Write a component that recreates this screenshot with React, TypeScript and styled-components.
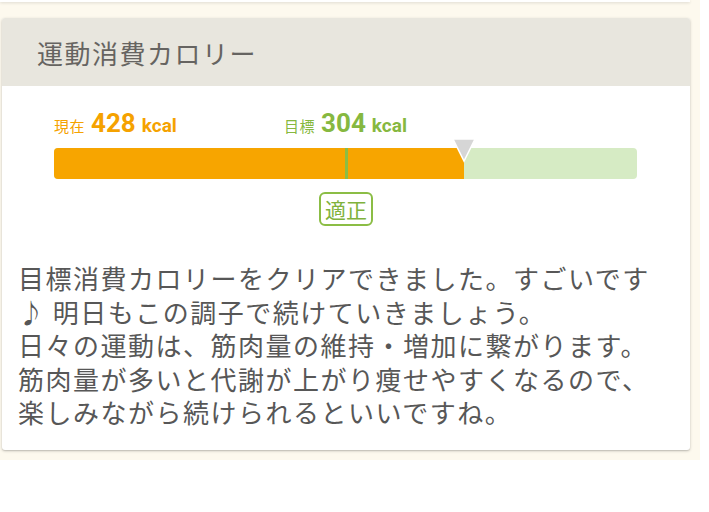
import React from "react";
import styled, { createGlobalStyle } from "styled-components";

const GlobalStyle = createGlobalStyle`
  html, body { margin: 0; padding: 0; background: #ffffff; }
  body { font-family: "Noto Sans CJK JP", "Noto Sans", sans-serif; }
`;

const Page = styled.div`
  width: 700px;
  box-sizing: border-box;
  background: #fdf9ee;
  padding: 0 10px 10px 2px;
`;

const PrevCard = styled.div`
  height: 2px;
  background: #ffffff;
  margin-left: -2px;
  box-shadow: 0 1px 3px rgba(0, 0, 0, 0.14);
  margin-bottom: 16px;
`;

const Card = styled.section`
  background: #ffffff;
  border-radius: 3px;
  overflow: hidden;
  box-shadow: 0 1px 3px rgba(0, 0, 0, 0.22), 0 1px 1px rgba(0, 0, 0, 0.08);
`;

const Header = styled.header`
  height: 68px;
  display: flex;
  align-items: center;
  padding-left: 35px;
  background: #e8e6de;
  color: #666461;
  font-size: 26px;
  letter-spacing: 1.5px;
`;

const Gauge = styled.div`
  padding: 24px 53px 0 52px;
  display: flex;
  flex-direction: column;
`;

const Labels = styled.div`
  position: relative;
  height: 26px;
  line-height: 26px;
`;

const Label = styled.div<{ $color: string }>`
  position: absolute;
  top: 0;
  display: flex;
  align-items: baseline;
  white-space: nowrap;
  color: ${(p) => p.$color};
`;

const LabelName = styled.span`
  font-family: "Noto Sans CJK JP", sans-serif;
  font-size: 15px;
  letter-spacing: 0.5px;
  margin-right: 6px;
`;

const LabelValue = styled.span`
  font-family: Roboto, "Liberation Sans", sans-serif;
  font-weight: 700;
  font-size: 26px;
`;

const LabelUnit = styled.span`
  font-family: Roboto, "Liberation Sans", sans-serif;
  font-weight: 700;
  font-size: 19px;
  margin-left: 6px;
`;

const Track = styled.div`
  position: relative;
  margin-top: 12px;
  height: 31px;
  border-radius: 4px;
  background: #d6ebc4;
`;

const Fill = styled.div`
  height: 100%;
  background: #f7a500;
  border-radius: 4px 0 0 4px;
`;

const Marker = styled.div`
  position: absolute;
  top: 0;
  bottom: 0;
  width: 3px;
  margin-left: -1px;
  background: #8bbd45;
`;

const Pointer = styled.svg`
  position: absolute;
  top: -10px;
  width: 24px;
  height: 25px;
  margin-left: -12px;
`;

const BadgeRow = styled.div`
  display: flex;
  justify-content: center;
  margin-top: 13px;
`;

const Badge = styled.div`
  box-sizing: border-box;
  width: 54px;
  height: 34px;
  border: 2px solid #8bbd45;
  border-radius: 6px;
  display: flex;
  align-items: center;
  justify-content: center;
  color: #7fb23c;
  font-size: 21px;
`;

const Message = styled.p`
  margin: 35px 0 0;
  padding: 0 16px 21px;
  color: #575757;
  font-size: 26px;
  letter-spacing: 1.5px;
  line-height: 33.5px;
`;

const current = 428;
const target = 304;
const max = target * 2;

export default function App() {
  const fillPct = (current / max) * 100;
  const targetPct = (target / max) * 100;
  return (
    <>
      <GlobalStyle />
      <Page>
        <PrevCard />
        <Card>
          <Header>運動消費カロリー</Header>
          <Gauge>
            <Labels>
              <Label $color="#f5a200" style={{ left: 0 }}>
                <LabelName>現在</LabelName>
                <LabelValue>{current}</LabelValue>
                <LabelUnit>kcal</LabelUnit>
              </Label>
              <Label
                $color="#86b840"
                style={{ left: `${targetPct}%`, transform: "translateX(-50%)" }}
              >
                <LabelName>目標</LabelName>
                <LabelValue>{target}</LabelValue>
                <LabelUnit>kcal</LabelUnit>
              </Label>
            </Labels>
            <Track>
              <Fill style={{ width: `${fillPct}%` }} />
              <Marker style={{ left: `${targetPct}%` }} />
              <Pointer style={{ left: `${fillPct}%` }} viewBox="0 0 24 25">
                <polygon
                  points="1,1 23,1 12,23"
                  fill="#d6d6d6"
                  stroke="#ffffff"
                  strokeWidth="1.5"
                  strokeLinejoin="miter"
                />
              </Pointer>
            </Track>
          </Gauge>
          <BadgeRow>
            <Badge>適正</Badge>
          </BadgeRow>
          <Message>
            目標消費カロリーをクリアできました。すごいです
            <br />
            ♪ 明日もこの調子で続けていきましょう。
            <br />
            日々の運動は、筋肉量の維持・増加に繋がります。
            <br />
            筋肉量が多いと代謝が上がり痩せやすくなるので、
            <br />
            楽しみながら続けられるといいですね。
          </Message>
        </Card>
      </Page>
    </>
  );
}
